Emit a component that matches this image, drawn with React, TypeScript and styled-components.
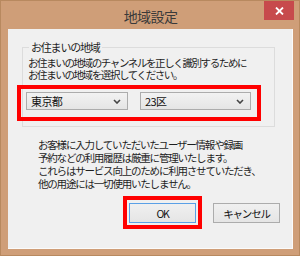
import React from 'react';
import styled, { createGlobalStyle } from 'styled-components';

const GlobalStyle = createGlobalStyle`
  html, body {
    margin: 0;
    padding: 0;
    background: #ffffff;
  }
  body {
    font-family: "Noto Sans CJK JP", "Noto Sans", sans-serif;
  }
`;

const Window = styled.div`
  width: 300px;
  height: 256px;
  box-sizing: border-box;
  background: #cf9e78;
  border: 1px solid #b8895f;
  display: flex;
  flex-direction: column;
  padding: 0 6px 6px 7px;
  font-family: "Noto Sans CJK JP", "Noto Sans", sans-serif;
  color: #1e1e1e;
`;

const TitleBar = styled.div`
  height: 28px;
  display: grid;
  grid-template-columns: 1fr auto 1fr;
`;

const Title = styled.div`
  grid-column: 2;
  font-size: 14px;
  line-height: 30px;
  color: #3a3a3a;
  letter-spacing: -0.6px;
`;

const CloseButton = styled.div`
  grid-column: 3;
  justify-self: end;
  margin-right: -1px;
  width: 30px;
  height: 19px;
  background: #c74a4c;
  display: flex;
  align-items: center;
  justify-content: center;
`;

const Client = styled.div`
  flex: 1;
  background: #f0f0f0;
  border-right: 1px solid #fbfbfb;
  border-bottom: 1px solid #fbfbfb;
  display: flex;
  flex-direction: column;
  padding-top: 10px;
`;

const Group = styled.fieldset`
  margin: 0 0 0 14px;
  width: 253px;
  box-sizing: border-box;
  border: 1px solid #dcdcdc;
  padding: 2px 5px 16px 5px;
  min-width: 0;
`;

const Legend = styled.legend`
  font-size: 11px;
  line-height: 16px;
  letter-spacing: -1.2px;
  padding: 0 2px;
  margin-left: 1px;
`;

const Note = styled.p<{ $lineHeight: number; $spacing: number }>`
  margin: 0;
  font-size: 10.5px;
  line-height: ${({ $lineHeight }) => $lineHeight}px;
  letter-spacing: ${({ $spacing }) => $spacing}px;
  white-space: nowrap;
`;

// red annotation frame drawn over its content
const Highlight = styled.div<{ $t: number; $r: number; $b: number; $l: number }>`
  position: relative;
  &::after {
    content: '';
    position: absolute;
    top: ${({ $t }) => -$t}px;
    right: ${({ $r }) => -$r}px;
    bottom: ${({ $b }) => -$b}px;
    left: ${({ $l }) => -$l}px;
    border: 4px solid #ff0000;
    pointer-events: none;
  }
`;

const SelectRow = styled(Highlight)`
  display: flex;
  gap: 12px;
  margin-top: 11px;
  margin-left: -2px;
  width: 225px;
`;

const Combo = styled.div<{ $width: number }>`
  width: ${({ $width }) => $width}px;
  height: 18px;
  box-sizing: border-box;
  border: 1px solid #acacac;
  background: linear-gradient(#f2f2f2, #e5e5e5);
  display: flex;
  align-items: center;
  justify-content: space-between;
  padding: 0 6px 0 4px;
  font-size: 11px;
  letter-spacing: -0.6px;
  color: #111;
`;

const Paragraph = styled(Note)`
  margin: 11px 0 0 30px;
`;

const ButtonRow = styled.div`
  display: flex;
  justify-content: flex-end;
  gap: 17px;
  margin-top: 13px;
  padding-right: 12px;
`;

const Button = styled.div<{ $focused?: boolean }>`
  width: 67px;
  height: 20px;
  box-sizing: border-box;
  border: 1px solid ${({ $focused }) => ($focused ? '#5aa0e6' : '#acacac')};
  background: linear-gradient(#f0f0f0, #e5e5e5);
  display: flex;
  align-items: center;
  justify-content: center;
  font-size: 10.5px;
  letter-spacing: -1.2px;
  color: #111;
`;

const Chevron = () => (
  <svg width="8" height="5" viewBox="0 0 8 5">
    <path d="M1 1 L4 4 L7 1" fill="none" stroke="#444" strokeWidth="1.6" />
  </svg>
);

export default function App() {
  return (
    <>
      <GlobalStyle />
      <Window>
        <TitleBar>
          <Title>地域設定</Title>
          <CloseButton>
            <svg width="9" height="8" viewBox="0 0 9 8">
              <path d="M1 0.5 L8 7.5 M8 0.5 L1 7.5" stroke="#ffffff" strokeWidth="1.8" />
            </svg>
          </CloseButton>
        </TitleBar>
        <Client>
          <Group>
            <Legend>お住まいの地域</Legend>
            <Note $lineHeight={12} $spacing={-1.4}>
              お住まいの地域のチャンネルを正しく識別するために
              <br />
              お住まいの地域を選択してください。
            </Note>
            <SelectRow $t={7} $r={10} $b={11} $l={9}>
              <Combo $width={102}>
                <span>東京都</span>
                <Chevron />
              </Combo>
              <Combo $width={111}>
                <span>23区</span>
                <Chevron />
              </Combo>
            </SelectRow>
          </Group>
          <Paragraph $lineHeight={13} $spacing={-1.2}>
            お客様に入力していただいたユーザー情報や録画
            <br />
            予約などの利用履歴は厳重に管理いたします。
            <br />
            これらはサービス向上のために利用させていただき、
            <br />
            他の用途には一切使用いたしません。
          </Paragraph>
          <ButtonRow>
            <Highlight $t={7} $r={6} $b={6} $l={6}>
              <Button $focused>OK</Button>
            </Highlight>
            <Button>キャンセル</Button>
          </ButtonRow>
        </Client>
      </Window>
    </>
  );
}
